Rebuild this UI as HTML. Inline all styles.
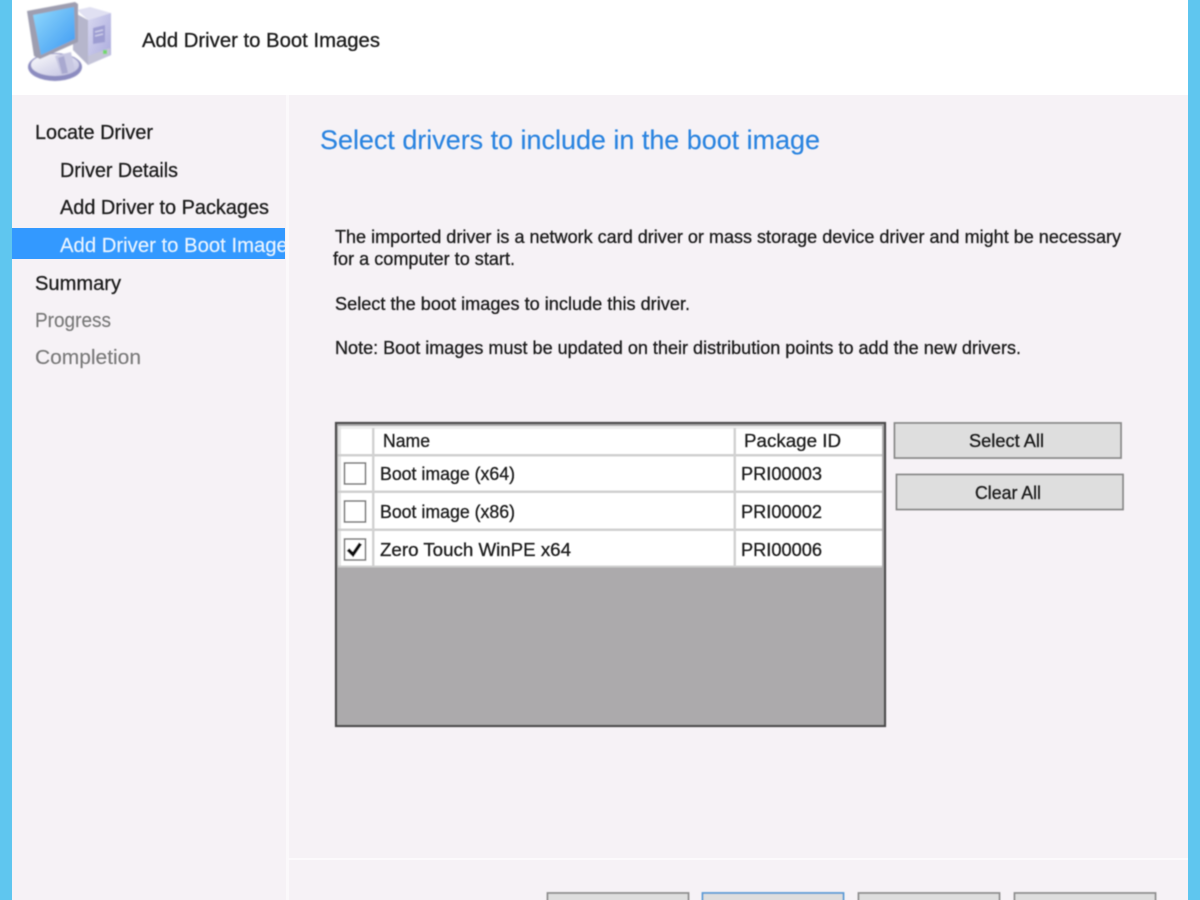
<!DOCTYPE html>
<html><head><meta charset="utf-8"><title>Add Driver to Boot Images</title>
<style>
html,body{margin:0;padding:0;width:1200px;height:900px;overflow:hidden;background:#f6f2f6}
svg{display:block}
text{font-family:"Liberation Sans",sans-serif;fill:#1c1c1c}
.t{filter:url(#b)}
.t text{stroke:#1c1c1c;stroke-width:.3px}
.t text.g{fill:#7a7a7a;stroke:#7a7a7a;stroke-width:.15px}
.t text.h{fill:#2b84e0;stroke:#2b84e0;stroke-width:.15px}
.t text.w{fill:#eaf4ff;stroke:#eaf4ff;stroke-width:.15px}
</style></head><body>
<svg width="1200" height="900" viewBox="0 0 1200 900" xmlns="http://www.w3.org/2000/svg">
<defs>
<filter id="b" x="-5%" y="-5%" width="110%" height="110%"><feGaussianBlur stdDeviation="0.55"/></filter>
<filter id="b2" x="-5%" y="-5%" width="110%" height="110%"><feGaussianBlur stdDeviation="0.8"/></filter>
<linearGradient id="scr" x1="0" y1="0" x2="1" y2="1"><stop offset="0" stop-color="#92dafc"/><stop offset="1" stop-color="#3c98f2"/></linearGradient>
<linearGradient id="tw" x1="0" y1="0" x2="1" y2="1"><stop offset="0" stop-color="#d8d8f0"/><stop offset="1" stop-color="#a8a8dc"/></linearGradient>
<linearGradient id="bs" x1="0" y1="0" x2="1" y2="1"><stop offset="0" stop-color="#fafafc"/><stop offset="1" stop-color="#c0c0e0"/></linearGradient>
<clipPath id="nav"><rect x="12" y="228" width="273" height="32"/></clipPath>
</defs>
<rect width="1200" height="900" fill="#f6f2f6"/>
<rect x="12" y="0" width="1176" height="95" fill="#fff"/>
<rect x="0" y="0" width="12" height="900" fill="#5fc6ef"/>
<rect x="1188" y="0" width="12" height="900" fill="#5fc6ef"/>
<rect x="286" y="95" width="3" height="805" fill="#fbf9fb"/>
<rect x="288" y="858" width="900" height="2" fill="#fcfafc"/>

<!-- computer icon -->
<g filter="url(#b2)">
<polygon points="77,10 90,7 111,13 88,20" fill="#e0e0f2"/>
<polygon points="73,12 88,20 88,65 73,50" fill="#b6b6cc"/>
<polygon points="88,20 111,13 111,55 88,65" fill="url(#tw)"/>
<polygon points="93,28 105,25 105,42 93,44" fill="#9d9dd2"/>
<path d="M95 32l8-2M95 36l8-2" stroke="#d6d6ee" stroke-width="1.2"/>
<polygon points="88,56 110,48 110,55 88,65" fill="#c4c4d8"/>
<rect x="103" y="50" width="4" height="4" fill="#72d86a"/>
<ellipse cx="55" cy="67" rx="27" ry="14" fill="#8c8cc0"/>
<ellipse cx="55" cy="65" rx="24" ry="11" fill="url(#bs)"/>
<polygon points="55,56 71,52 75,71 61,75" fill="#c8c8e2"/>
<polygon points="58,58 64,56 68,73 62,74" fill="#a9a9d0"/>
<polygon points="27,11 75,2 78,4 78,42 40,59 34,56" fill="#9e9eb0"/>
<polygon points="33,15 74,7 75,39 41,55" fill="url(#scr)"/>
</g>

<g class="t">
<text x="142" y="47" font-size="20" textLength="238" lengthAdjust="spacingAndGlyphs">Add Driver to Boot Images</text>
<text x="35" y="139" font-size="20" textLength="118" lengthAdjust="spacingAndGlyphs">Locate Driver</text>
<text x="60" y="177" font-size="20" textLength="118" lengthAdjust="spacingAndGlyphs">Driver Details</text>
<text x="60" y="214" font-size="20" textLength="209" lengthAdjust="spacingAndGlyphs">Add Driver to Packages</text>
<text x="35" y="290" font-size="20" textLength="86" lengthAdjust="spacingAndGlyphs">Summary</text>
<text class="g" x="35" y="327" font-size="20" textLength="76" lengthAdjust="spacingAndGlyphs">Progress</text>
<text class="g" x="35" y="364" font-size="20" textLength="106" lengthAdjust="spacingAndGlyphs">Completion</text>
</g>
<rect x="12" y="228" width="273" height="31" fill="#3399ff"/>
<g clip-path="url(#nav)"><g class="t"><text class="w" x="60" y="252" font-size="20" textLength="238" lengthAdjust="spacingAndGlyphs">Add Driver to Boot Images</text></g></g>

<g class="t">
<text class="h" x="320" y="149" font-size="27" textLength="500" lengthAdjust="spacingAndGlyphs">Select drivers to include in the boot image</text>
<text x="335" y="243" font-size="18" textLength="786" lengthAdjust="spacingAndGlyphs">The imported driver is a network card driver or mass storage device driver and might be necessary</text>
<text x="333" y="265" font-size="18" textLength="182" lengthAdjust="spacingAndGlyphs">for a computer to start.</text>
<text x="335" y="310" font-size="18" textLength="355" lengthAdjust="spacingAndGlyphs">Select the boot images to include this driver.</text>
<text x="335" y="354" font-size="18" textLength="686" lengthAdjust="spacingAndGlyphs">Note: Boot images must be updated on their distribution points to add the new drivers.</text>
</g>

<!-- grid -->
<g filter="url(#b)">
<rect x="336" y="423" width="549" height="303" fill="#acaaac" stroke="#4c4c4c" stroke-width="2.2"/>
<rect x="338" y="426" width="544" height="141" fill="#fff"/>
<rect x="338" y="426" width="544" height="3" fill="#eeeeee"/>
<rect x="338" y="426" width="3" height="141" fill="#e4e4e4"/>
<rect x="338" y="454" width="544" height="2.500" fill="#cfcfcf"/>
<rect x="338" y="490.500" width="544" height="2.500" fill="#cfcfcf"/>
<rect x="338" y="528.500" width="544" height="2.500" fill="#cfcfcf"/>
<rect x="338" y="565.500" width="544" height="2" fill="#cfcfcf"/>
<rect x="372" y="428" width="2.500" height="138" fill="#d2d2d2"/>
<rect x="733.500" y="428" width="2.500" height="138" fill="#d2d2d2"/>
<rect x="344.500" y="463" width="21" height="21" fill="#fff" stroke="#7a7a7a" stroke-width="1.600"/>
<rect x="344.500" y="501" width="21" height="21" fill="#fff" stroke="#7a7a7a" stroke-width="1.600"/>
<rect x="344.500" y="539" width="21" height="21" fill="#fff" stroke="#7a7a7a" stroke-width="1.600"/>
<path d="M348 549.500l5 5 7.500-11" fill="none" stroke="#111" stroke-width="3.600"/>
<!-- buttons -->
<rect x="894.500" y="423" width="226.500" height="35" fill="#dedede" stroke="#8a8a8a" stroke-width="1.800"/>
<rect x="896.500" y="474.500" width="226.500" height="35" fill="#dedede" stroke="#8a8a8a" stroke-width="1.800"/>
<rect x="547.500" y="893" width="141" height="20" fill="#dedede" stroke="#8f8f8f" stroke-width="1.800"/>
<rect x="702.500" y="893" width="141" height="20" fill="#dedede" stroke="#5b9bd5" stroke-width="1.800"/>
<rect x="858.500" y="893" width="141" height="20" fill="#dedede" stroke="#8f8f8f" stroke-width="1.800"/>
<rect x="1014.500" y="893" width="141" height="20" fill="#dedede" stroke="#8f8f8f" stroke-width="1.800"/>
</g>
<g class="t" font-size="18">
<text x="383" y="447" font-size="18" textLength="47" lengthAdjust="spacingAndGlyphs">Name</text>
<text x="744" y="447" font-size="18" textLength="97" lengthAdjust="spacingAndGlyphs">Package ID</text>
<text x="380" y="480" font-size="18" textLength="135" lengthAdjust="spacingAndGlyphs">Boot image (x64)</text>
<text x="380" y="518" font-size="18" textLength="135" lengthAdjust="spacingAndGlyphs">Boot image (x86)</text>
<text x="380" y="556" font-size="18" textLength="191" lengthAdjust="spacingAndGlyphs">Zero Touch WinPE x64</text>
<text x="741" y="480" font-size="18" textLength="81" lengthAdjust="spacingAndGlyphs">PRI00003</text>
<text x="741" y="518" font-size="18" textLength="81" lengthAdjust="spacingAndGlyphs">PRI00002</text>
<text x="741" y="556" font-size="18" textLength="81" lengthAdjust="spacingAndGlyphs">PRI00006</text>
<text x="969" y="447" font-size="18" textLength="75" lengthAdjust="spacingAndGlyphs">Select All</text>
<text x="975" y="499" font-size="18" textLength="66" lengthAdjust="spacingAndGlyphs">Clear All</text>
</g>
</svg>
</body></html>
